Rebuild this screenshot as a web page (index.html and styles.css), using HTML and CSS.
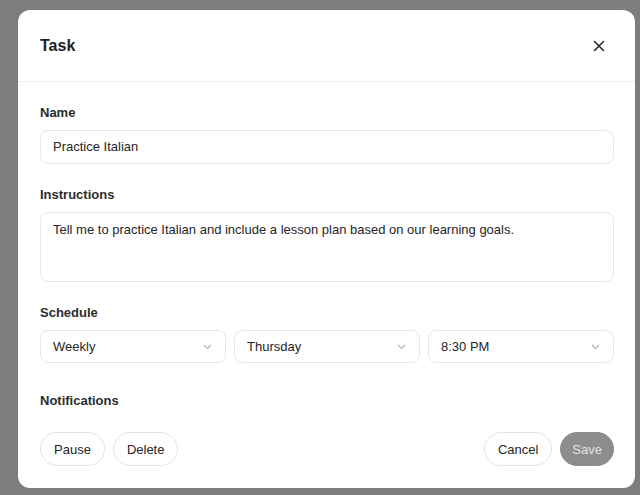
FILE: index.html
```html
<!DOCTYPE html>
<html>
<head>
<meta charset="utf-8">
<link rel="stylesheet" href="styles.css">
</head>
<body>
<div class="modal">
  <div class="header">
    <div class="title">Task</div>
    <button class="close" aria-label="Close">
      <svg width="12" height="12" viewBox="0 0 12 12"><path d="M1.5 1.5 L10.5 10.5 M10.5 1.5 L1.5 10.5" stroke="#2a2a2a" stroke-width="1.6" stroke-linecap="round"/></svg>
    </button>
  </div>
  <div class="body">
    <div class="field">
      <div class="label">Name</div>
      <div class="input">Practice Italian</div>
    </div>
    <div class="field">
      <div class="label">Instructions</div>
      <div class="textarea">Tell me to practice Italian and include a lesson plan based on our learning goals.</div>
    </div>
    <div class="field">
      <div class="label">Schedule</div>
      <div class="selects">
        <div class="select"><span>Weekly</span><svg class="chev" width="9" height="6" viewBox="0 0 9 6"><path d="M1 1 L4.5 4.5 L8 1" fill="none" stroke="#b0b0b0" stroke-width="1.1"/></svg></div>
        <div class="select"><span>Thursday</span><svg class="chev" width="9" height="6" viewBox="0 0 9 6"><path d="M1 1 L4.5 4.5 L8 1" fill="none" stroke="#b0b0b0" stroke-width="1.1"/></svg></div>
        <div class="select"><span>8:30 PM</span><svg class="chev" width="9" height="6" viewBox="0 0 9 6"><path d="M1 1 L4.5 4.5 L8 1" fill="none" stroke="#b0b0b0" stroke-width="1.1"/></svg></div>
      </div>
    </div>
    <div class="field notif">
      <div class="label">Notifications</div>
    </div>
    <div class="actions">
      <div class="group">
        <button class="btn">Pause</button>
        <button class="btn">Delete</button>
      </div>
      <div class="group">
        <button class="btn">Cancel</button>
        <button class="btn save">Save</button>
      </div>
    </div>
  </div>
</div>
</body>
</html>
```

FILE: styles.css
```css
* { box-sizing: border-box; }
html, body { margin: 0; padding: 0; }
body {
  background: #7d7d7d;
  font-family: "Liberation Sans", Arial, sans-serif;
  color: #1f1f1f;
  width: 640px;
  height: 495px;
  overflow: hidden;
}
.modal {
  margin: 10px 5px 0 18px;
  width: 617px;
  height: 478px;
  background: #fff;
  border-radius: 12px;
}
.header {
  height: 72px;
  display: flex;
  align-items: center;
  justify-content: space-between;
  padding: 0 30px 0 22px;
  border-bottom: 1px solid #eeeeee;
}
.title {
  font-size: 16px;
  font-weight: bold;
  color: #222;
}
.close {
  border: 0;
  background: none;
  padding: 0;
  width: 12px;
  height: 12px;
  display: flex;
}
.body {
  padding: 23px 21px 0 22px;
}
.field { margin-bottom: 23px; }
.label {
  font-size: 13px;
  line-height: 16px;
  font-weight: bold;
  color: #2c2c2c;
  margin-bottom: 9px;
}
.input, .textarea, .select {
  border: 1px solid #e6e6e6;
  border-radius: 8px;
  font-size: 13px;
  color: #262626;
  padding: 0 12px;
}
.input {
  height: 34px;
  line-height: 32px;
}
.textarea {
  height: 70px;
  padding-top: 9px;
  line-height: 16px;
}
.selects {
  display: grid;
  grid-template-columns: 1fr 1fr 1fr;
  gap: 8px;
}
.select {
  height: 33px;
  display: flex;
  align-items: center;
  justify-content: space-between;
  padding-right: 13px;
}
.chev { display: block; }
.notif { margin-top: 30px; }
.notif .label { margin-bottom: 0; }
.actions {
  display: flex;
  justify-content: space-between;
  margin-top: 23px;
}
.group { display: flex; gap: 8px; }
.btn {
  font-family: "Liberation Sans", Arial, sans-serif;
  height: 34px;
  border: 1px solid #e4e4e4;
  background: #fff;
  border-radius: 17px;
  padding: 0 13px;
  font-size: 13px;
  color: #262626;
}
.save {
  background: #8d8d8d;
  border-color: #8d8d8d;
  color: #e4e4e4;
  padding: 0 11px;
}
```
